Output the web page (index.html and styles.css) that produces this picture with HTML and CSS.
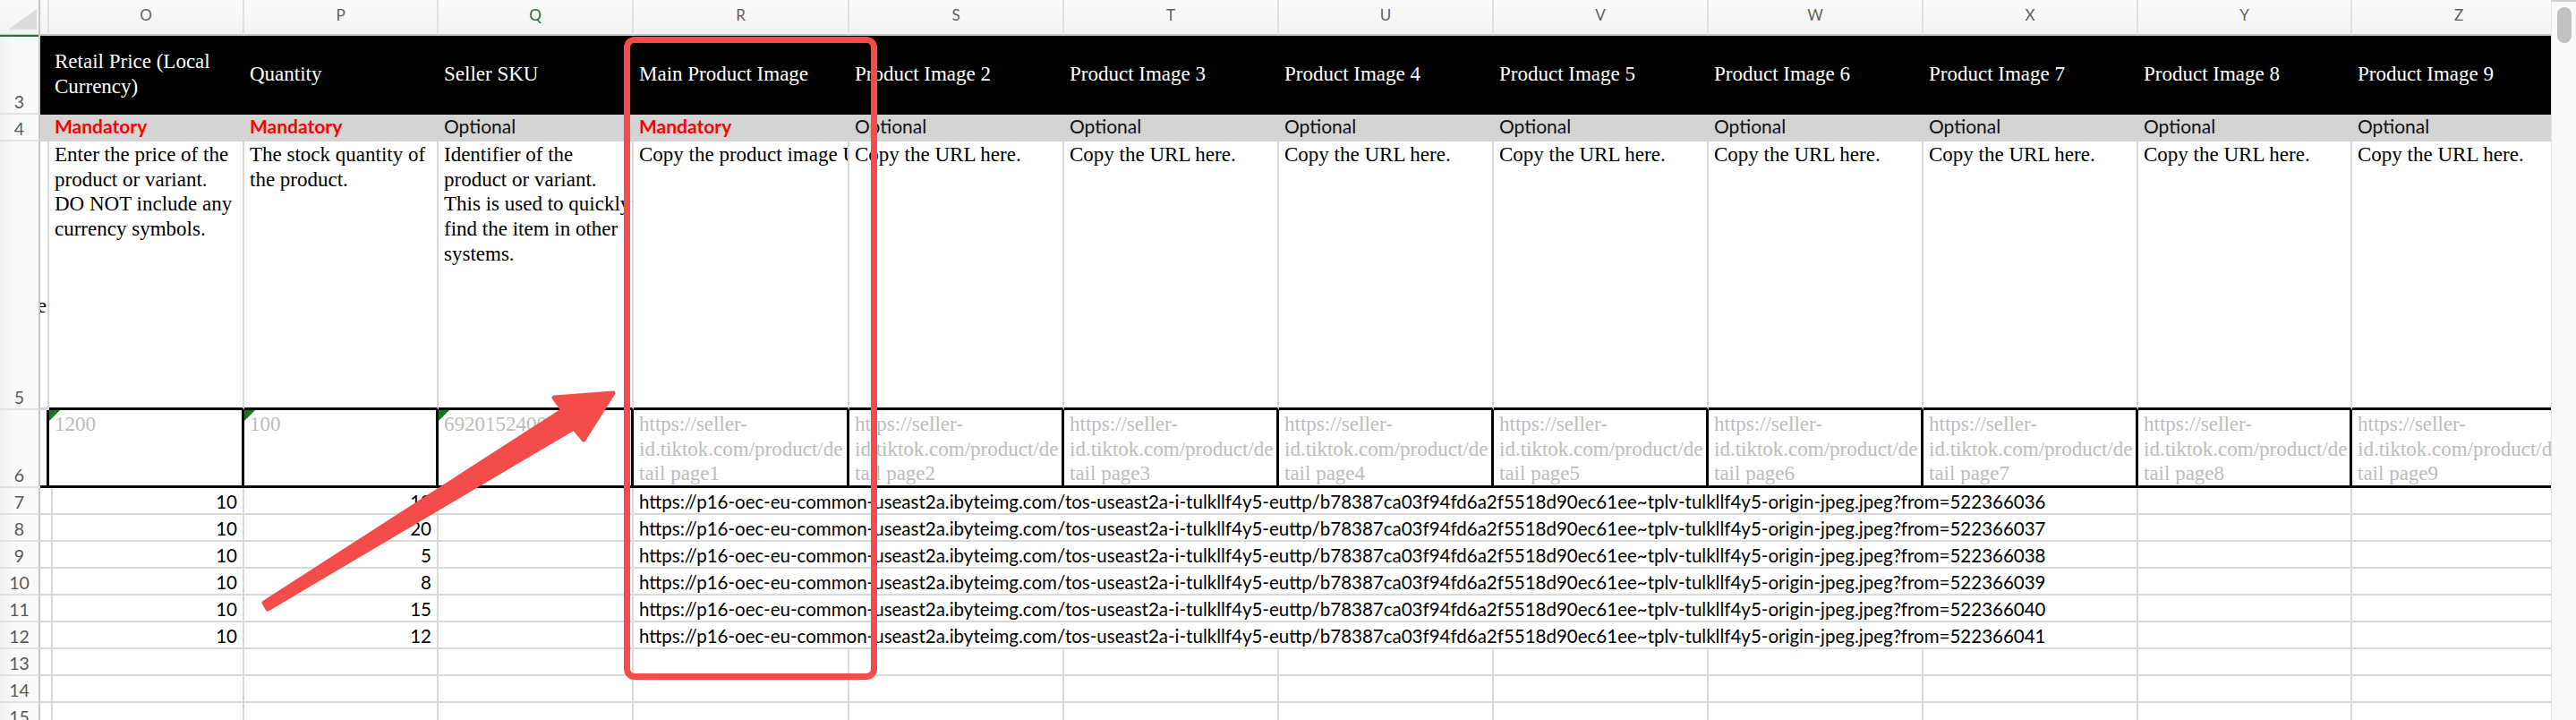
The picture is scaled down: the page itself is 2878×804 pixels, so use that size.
FILE: index.html
```html
<!DOCTYPE html>
<html lang="en">
<head>
<meta charset="utf-8">
<title>Product template</title>
<link rel="stylesheet" href="styles.css">
</head>
<body>
<div class="sheet">
  <div class="grid">
    <!-- column letters -->
    <div class="ch corner"><svg class="selall" width="45" height="40" viewBox="0 0 45 40"><polygon points="9,33 41,33 41,10" fill="#dcdcdc"/></svg></div>
    <div class="ch"></div>
    <div class="ch">O</div>
    <div class="ch">P</div>
    <div class="ch sel">Q</div>
    <div class="ch">R</div>
    <div class="ch">S</div>
    <div class="ch">T</div>
    <div class="ch">U</div>
    <div class="ch">V</div>
    <div class="ch">W</div>
    <div class="ch">X</div>
    <div class="ch">Y</div>
    <div class="ch">Z</div>

    <!-- row 3 -->
    <div class="rh">3</div>
    <div class="h"></div>
    <div class="h">Retail Price (Local<br>Currency)</div>
    <div class="h">Quantity</div>
    <div class="h">Seller SKU</div>
    <div class="h">Main Product Image</div>
    <div class="h">Product Image 2</div>
    <div class="h">Product Image 3</div>
    <div class="h">Product Image 4</div>
    <div class="h">Product Image 5</div>
    <div class="h">Product Image 6</div>
    <div class="h">Product Image 7</div>
    <div class="h">Product Image 8</div>
    <div class="h">Product Image 9</div>

    <!-- row 4 -->
    <div class="rh">4</div>
    <div class="m"></div>
    <div class="m req">Mandatory</div>
    <div class="m req">Mandatory</div>
    <div class="m">Optional</div>
    <div class="m req">Mandatory</div>
    <div class="m">Optional</div>
    <div class="m">Optional</div>
    <div class="m">Optional</div>
    <div class="m">Optional</div>
    <div class="m">Optional</div>
    <div class="m">Optional</div>
    <div class="m">Optional</div>
    <div class="m">Optional</div>

    <!-- row 5 -->
    <div class="rh">5</div>
    <div class="d d-n"><span>e</span></div>
    <div class="d">Enter the price of the<br>product or variant.<br>DO NOT include any<br>currency symbols.</div>
    <div class="d">The stock quantity of<br>the product.</div>
    <div class="d">Identifier of the<br>product or variant.<br>This is used to quickly<br>find the item in other<br>systems.</div>
    <div class="d clip">Copy the product image URL here.</div>
    <div class="d">Copy the URL here.</div>
    <div class="d">Copy the URL here.</div>
    <div class="d">Copy the URL here.</div>
    <div class="d">Copy the URL here.</div>
    <div class="d">Copy the URL here.</div>
    <div class="d">Copy the URL here.</div>
    <div class="d">Copy the URL here.</div>
    <div class="d">Copy the URL here.</div>

    <!-- row 6 -->
    <div class="rh">6</div>
    <div class="e e-n"></div>
    <div class="e flag">1200</div>
    <div class="e flag">100</div>
    <div class="e flag">6920152400</div>
    <div class="e">https://seller-<br>id.tiktok.com/product/de<br>tail page1</div>
    <div class="e">https://seller-<br>id.tiktok.com/product/de<br>tail page2</div>
    <div class="e">https://seller-<br>id.tiktok.com/product/de<br>tail page3</div>
    <div class="e">https://seller-<br>id.tiktok.com/product/de<br>tail page4</div>
    <div class="e">https://seller-<br>id.tiktok.com/product/de<br>tail page5</div>
    <div class="e">https://seller-<br>id.tiktok.com/product/de<br>tail page6</div>
    <div class="e">https://seller-<br>id.tiktok.com/product/de<br>tail page7</div>
    <div class="e">https://seller-<br>id.tiktok.com/product/de<br>tail page8</div>
    <div class="e">https://seller-<br>id.tiktok.com/product/de<br>tail page9</div>

    <!-- rows 7-12 -->
    <div class="rh">7</div>
    <div class="v"></div><div class="v num">10</div><div class="v num">10</div><div class="v"></div>
    <div class="v url">https://p16-oec-eu-common-useast2a.ibyteimg.com/tos-useast2a-i-tulkllf4y5-euttp/b78387ca03f94fd6a2f5518d90ec61ee~tplv-tulkllf4y5-origin-jpeg.jpeg?from=522366036</div>
    <div class="v ov"></div><div class="v ov"></div><div class="v ov"></div><div class="v ov"></div><div class="v ov"></div><div class="v"></div><div class="v"></div><div class="v"></div>

    <div class="rh">8</div>
    <div class="v"></div><div class="v num">10</div><div class="v num">20</div><div class="v"></div>
    <div class="v url">https://p16-oec-eu-common-useast2a.ibyteimg.com/tos-useast2a-i-tulkllf4y5-euttp/b78387ca03f94fd6a2f5518d90ec61ee~tplv-tulkllf4y5-origin-jpeg.jpeg?from=522366037</div>
    <div class="v ov"></div><div class="v ov"></div><div class="v ov"></div><div class="v ov"></div><div class="v ov"></div><div class="v"></div><div class="v"></div><div class="v"></div>

    <div class="rh">9</div>
    <div class="v"></div><div class="v num">10</div><div class="v num">5</div><div class="v"></div>
    <div class="v url">https://p16-oec-eu-common-useast2a.ibyteimg.com/tos-useast2a-i-tulkllf4y5-euttp/b78387ca03f94fd6a2f5518d90ec61ee~tplv-tulkllf4y5-origin-jpeg.jpeg?from=522366038</div>
    <div class="v ov"></div><div class="v ov"></div><div class="v ov"></div><div class="v ov"></div><div class="v ov"></div><div class="v"></div><div class="v"></div><div class="v"></div>

    <div class="rh">10</div>
    <div class="v"></div><div class="v num">10</div><div class="v num">8</div><div class="v"></div>
    <div class="v url">https://p16-oec-eu-common-useast2a.ibyteimg.com/tos-useast2a-i-tulkllf4y5-euttp/b78387ca03f94fd6a2f5518d90ec61ee~tplv-tulkllf4y5-origin-jpeg.jpeg?from=522366039</div>
    <div class="v ov"></div><div class="v ov"></div><div class="v ov"></div><div class="v ov"></div><div class="v ov"></div><div class="v"></div><div class="v"></div><div class="v"></div>

    <div class="rh">11</div>
    <div class="v"></div><div class="v num">10</div><div class="v num">15</div><div class="v"></div>
    <div class="v url">https://p16-oec-eu-common-useast2a.ibyteimg.com/tos-useast2a-i-tulkllf4y5-euttp/b78387ca03f94fd6a2f5518d90ec61ee~tplv-tulkllf4y5-origin-jpeg.jpeg?from=522366040</div>
    <div class="v ov"></div><div class="v ov"></div><div class="v ov"></div><div class="v ov"></div><div class="v ov"></div><div class="v"></div><div class="v"></div><div class="v"></div>

    <div class="rh">12</div>
    <div class="v"></div><div class="v num">10</div><div class="v num">12</div><div class="v"></div>
    <div class="v url">https://p16-oec-eu-common-useast2a.ibyteimg.com/tos-useast2a-i-tulkllf4y5-euttp/b78387ca03f94fd6a2f5518d90ec61ee~tplv-tulkllf4y5-origin-jpeg.jpeg?from=522366041</div>
    <div class="v ov"></div><div class="v ov"></div><div class="v ov"></div><div class="v ov"></div><div class="v ov"></div><div class="v"></div><div class="v"></div><div class="v"></div>

    <!-- rows 13-15 -->
    <div class="rh">13</div>
    <div class="v"></div><div class="v"></div><div class="v"></div><div class="v"></div><div class="v"></div><div class="v"></div><div class="v"></div><div class="v"></div><div class="v"></div><div class="v"></div><div class="v"></div><div class="v"></div><div class="v"></div>
    <div class="rh">14</div>
    <div class="v"></div><div class="v"></div><div class="v"></div><div class="v"></div><div class="v"></div><div class="v"></div><div class="v"></div><div class="v"></div><div class="v"></div><div class="v"></div><div class="v"></div><div class="v"></div><div class="v"></div>
    <div class="rh">15</div>
    <div class="v"></div><div class="v"></div><div class="v"></div><div class="v"></div><div class="v"></div><div class="v"></div><div class="v"></div><div class="v"></div><div class="v"></div><div class="v"></div><div class="v"></div><div class="v"></div><div class="v"></div>
  </div>

  <div class="scrollbar"><div class="thumb"></div></div>

  <div class="rowsel"></div>
  <div class="highlight"></div>
  <svg class="arrow" width="2878" height="804" viewBox="0 0 2878 804">
    <polygon points="295,673 629,458 619,444 685,439 652,491 641,478 299,680" fill="#f44c4a" stroke="#f44c4a" stroke-width="5" stroke-linejoin="round"/>
  </svg>
</div>
</body>
</html>
```

FILE: styles.css
```css
* { box-sizing: border-box; }

html, body {
  margin: 0;
  padding: 0;
}

body {
  width: 2878px;
  height: 804px;
  overflow: hidden;
  background: #ffffff;
  font-family: "Liberation Serif", "Times New Roman", serif;
  color: #000;
}

.sheet {
  position: relative;
  display: flex;
  width: 2878px;
  height: 804px;
  overflow: hidden;
}

.grid {
  flex: none;
  width: 2850px;
  height: 804px;
  overflow: hidden;
  display: grid;
  grid-template-columns: 45px 10px 218px 217px 218px 241px 240px 240px 240px 240px 240px 240px 239px 240px;
  grid-template-rows: 40px 88px 30px 300px 87px repeat(9, 30px);
  align-content: start;
}

.grid > div {
  min-width: 0;
  border-right: 2px solid #d9d9d9;
  border-bottom: 2px solid #d9d9d9;
}

/* column letters */
.ch {
  background: linear-gradient(#fbfbfb, #f3f3f3);
  border-right-color: #e0e0e0 !important;
  border-bottom: 2px solid #c4c4c4 !important;
  display: flex;
  align-items: center;
  justify-content: center;
  padding-bottom: 4px;
  font: 17px/20px "Lato", "Liberation Sans", sans-serif;
  color: #616161;
}
.ch.sel { color: #1d6f42; }
.corner { padding: 0; position: relative; border-right-color: #c6c6c6 !important; }
.selall { position: absolute; left: 0; top: 0; }

/* row numbers */
.rh {
  background: linear-gradient(90deg, #f1f1f1, #fafafa 40%);
  border-right: 2px solid #c6c6c6 !important;
  border-bottom-color: #e2e2e2 !important;
  display: flex;
  align-items: flex-end;
  justify-content: center;
  padding-bottom: 1px;
  font: 19.5px/23px "Lato", "Liberation Sans", sans-serif;
  color: #595959;
}

/* black header row */
.h {
  background: #000;
  border-color: #000 !important;
  color: #fff;
  display: flex;
  align-items: center;
  padding-left: 6px;
  font-size: 23px;
  line-height: 28px;
  white-space: nowrap;
}

/* mandatory / optional row */
.m {
  background: #d4d4d4;
  border-color: #d4d4d4 !important;
  display: flex;
  align-items: flex-end;
  padding: 0 0 3px 6px;
  font: 21px/25px "Lato", "Liberation Sans", sans-serif;
  color: #111;
  white-space: nowrap;
}
.m.req { color: #ff0000; font-weight: 700; }

/* description row */
.d {
  padding: 1px 0 0 6px;
  font-size: 23px;
  line-height: 27.7px;
  white-space: nowrap;
  border-bottom: 3px solid #000 !important;
}
.d.clip { overflow: hidden; }
.d-n {
  border-bottom-color: #d9d9d9 !important;
  overflow: hidden;
  display: flex;
  justify-content: flex-end;
  padding: 170px 1px 0 0;
}

/* example row */
.e {
  position: relative;
  border-right: 3px solid #000 !important;
  border-bottom: 3px solid #000 !important;
  padding: 2px 0 0 6px;
  font-size: 23px;
  line-height: 27.7px;
  color: #bdbdbd;
  white-space: nowrap;
  overflow: hidden;
}
.flag::before {
  content: "";
  position: absolute;
  left: 0;
  top: 0;
  width: 12px;
  height: 12px;
  background: #15791a;
  clip-path: polygon(0 0, 100% 0, 0 100%);
}

/* values */
.v {
  display: flex;
  align-items: flex-end;
  padding: 0 6px 1px 6px;
  font: 20.5px/24px "Lato", "Liberation Sans", sans-serif;
  color: #000;
  white-space: nowrap;
}
.v.num { justify-content: flex-end; }
.v.url { overflow: visible; border-right: none !important; position: relative; z-index: 1; }
.v.ov { border-right: none !important; }

/* scrollbar */
.scrollbar {
  flex: none;
  width: 28px;
  height: 804px;
  background: #f9f9f9;
  border-left: 1px solid #e4e4e4;
  border-top: 2px solid #d0d0d0;
  padding: 6px 0 0 6px;
}
.thumb {
  width: 16px;
  height: 40px;
  border-radius: 8px;
  background: #c2c2c2;
}

/* overlays */
.rowsel {
  position: absolute;
  left: 0;
  top: 39px;
  width: 43px;
  height: 2px;
  background: #1d7a45;
}
.highlight {
  position: absolute;
  left: 697px;
  top: 41px;
  width: 283px;
  height: 718px;
  border: 7px solid #f44c4a;
  border-radius: 12px;
  z-index: 2;
}
.arrow {
  position: absolute;
  left: 0;
  top: 0;
  z-index: 3;
  pointer-events: none;
}
```
